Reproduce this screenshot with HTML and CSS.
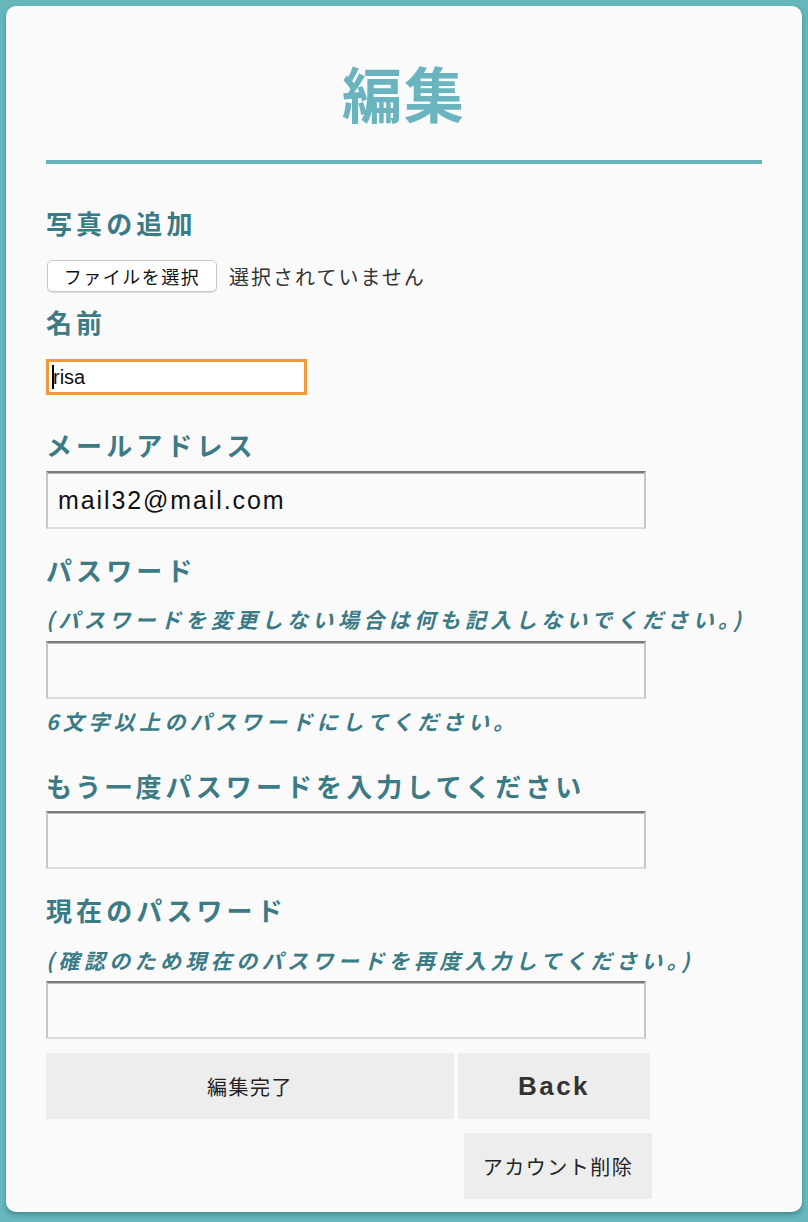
FILE: index.html
```html
<!DOCTYPE html>
<html lang="ja">
<head>
<meta charset="utf-8">
<title>編集</title>
<link rel="stylesheet" href="styles.css">
</head>
<body>
<div class="card">
  <h1 class="title">編集</h1>
  <hr class="rule">
  <form class="form">
    <div class="label l-photo">写真の追加</div>
    <div class="file-row">
      <span class="file-btn">ファイルを選択</span>
      <span class="file-none">選択されていません</span>
    </div>
    <div class="label l-name">名前</div>
    <div class="name-input"><span class="caret"></span>risa</div>
    <div class="label l-mail">メールアドレス</div>
    <div class="text-input in-mail">mail32@mail.com</div>
    <div class="label l-pass">パスワード</div>
    <div class="note n-1">(パスワードを変更しない場合は何も記入しないでください。)</div>
    <div class="text-input in-pass"></div>
    <div class="note n-2">6文字以上のパスワードにしてください。</div>
    <div class="label l-again">もう一度パスワードを入力してください</div>
    <div class="text-input in-again"></div>
    <div class="label l-current">現在のパスワード</div>
    <div class="note n-3">(確認のため現在のパスワードを再度入力してください。)</div>
    <div class="text-input in-current"></div>
    <div class="btn-row">
      <span class="btn btn-submit">編集完了</span>
      <span class="btn btn-back">Back</span>
    </div>
    <div class="btn-row2">
      <span class="btn btn-delete">アカウント削除</span>
    </div>
  </form>
</div>
</body>
</html>
```

FILE: styles.css
```css
html, body {
  margin: 0;
  padding: 0;
}
body {
  background: #66b6bc;
  padding: 6px;
  font-family: "Noto Sans CJK JP", "Noto Sans", sans-serif;
  box-sizing: border-box;
  height: 1222px;
}
.card {
  background: #fafafa;
  border-radius: 10px;
  padding: 46px 40px 14px 40px;
  box-shadow: 0 3px 4px rgba(40, 90, 100, 0.45);
  height: 1206px;
  box-sizing: border-box;
}
.title {
  margin: 0;
  text-align: center;
  font-size: 60px;
  line-height: 80px;
  font-weight: 700;
  color: #6ab4c0;
  letter-spacing: 2px;
}
.rule {
  margin: 28px 0 0 0;
  border: 0;
  height: 4px;
  background: #66b3bd;
}
.form {
  display: flex;
  flex-direction: column;
  align-items: flex-start;
}
.label {
  font-size: 26px;
  line-height: 36px;
  font-weight: 700;
  color: #3b7b86;
  letter-spacing: 4.1px;
}
.l-photo { margin-top: 41px; }
.l-name { margin-top: 12px; }
.l-mail { margin-top: 32px; }
.l-pass { margin-top: 23px; }
.l-again { margin-top: 33px; }
.l-current { margin-top: 23px; }

.file-row {
  margin-top: 19px;
  display: flex;
  align-items: center;
  margin-left: 1px;
}
.file-btn {
  display: inline-block;
  height: 32px;
  width: 170px;
  box-sizing: border-box;
  border: 1px solid #c9c9c9;
  border-radius: 5px;
  background: #fff;
  box-shadow: 0 1px 1px rgba(0,0,0,0.12);
  font-size: 18px;
  line-height: 30px;
  text-align: center;
  color: #111;
  letter-spacing: 1.5px;
}
.file-none {
  margin-left: 12px;
  font-size: 20px;
  color: #333;
  letter-spacing: 2px;
}
.name-input {
  margin-top: 19px;
  width: 261px;
  height: 36px;
  box-sizing: border-box;
  border: 3px solid #f29a38;
  background: #fff;
  font-family: "Liberation Sans", sans-serif;
  font-size: 20px;
  line-height: 30px;
  padding-left: 3px;
  color: #111;
  display: flex;
  align-items: center;
}
.caret {
  display: inline-block;
  width: 2px;
  height: 24px;
  background: #000;
  margin-right: -1px;
}
.text-input {
  width: 600px;
  height: 58px;
  box-sizing: border-box;
  border: 2px solid;
  border-color: #7a7a7a #c6c6c6 #dcdcdc #c6c6c6;
  box-shadow: inset 0 1px 0 #b8b8b8;
  background: #fafafa;
}
.in-mail {
  margin-top: 8px;
  font-family: "Liberation Sans", sans-serif;
  font-size: 25px;
  letter-spacing: 1.9px;
  line-height: 54px;
  padding-left: 10px;
  color: #111;
}
.in-pass { margin-top: 8px; }
.in-again { margin-top: 7px; }
.in-current { margin-top: 7px; }
.note {
  font-size: 21px;
  line-height: 28px;
  font-weight: 700;
  font-style: italic;
  color: #3b7b86;
  letter-spacing: 4.4px;
}
.n-1 { margin-top: 17px; }
.n-2 { margin-top: 8px; }
.n-3 { margin-top: 18px; }
.btn-row {
  margin-top: 14px;
  display: flex;
  gap: 4px;
}
.btn {
  display: flex;
  align-items: center;
  justify-content: center;
  height: 66px;
  background: #ededed;
  color: #222;
  font-size: 20px;
  letter-spacing: 1.5px;
}
.btn-submit { width: 408px; }
.btn-back {
  width: 192px;
  font-family: "Liberation Sans", sans-serif;
  font-weight: 700;
  font-size: 26px;
  letter-spacing: 2.5px;
  color: #333;
}
.btn-row2 {
  margin-top: 14px;
  margin-left: 418px;
}
.btn-delete { width: 188px; }
```
